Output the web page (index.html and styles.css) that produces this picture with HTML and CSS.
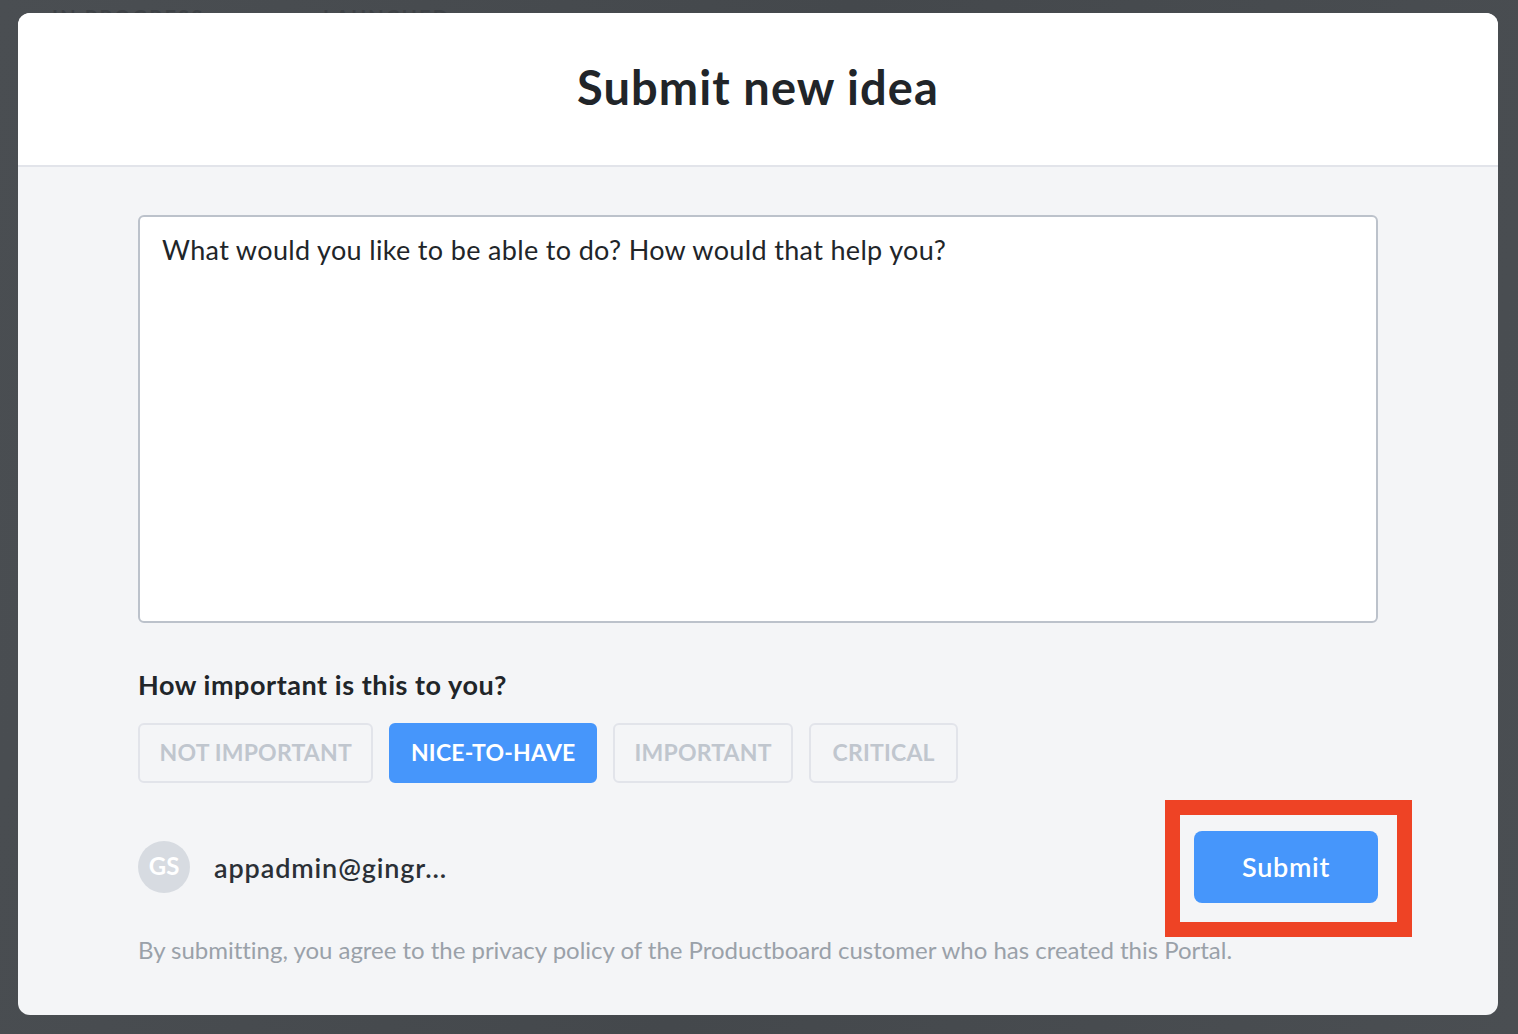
FILE: index.html
```html
<!DOCTYPE html>
<html lang="en">
<head>
<meta charset="utf-8">
<title>Submit new idea</title>
<link rel="stylesheet" href="styles.css">
</head>
<body>
<div class="backdrop">
  <div class="behind">
    <span class="behind-a">IN PROGRESS</span>
    <span class="behind-b">LAUNCHED</span>
  </div>
  <section class="modal">
    <header class="modal-head"><h1>Submit new idea</h1></header>
    <div class="modal-body">
      <div class="idea-box">What would you like to be able to do? How would that help you?</div>
      <h2>How important is this to you?</h2>
      <div class="choices">
        <button class="choice">NOT IMPORTANT</button>
        <button class="choice active">NICE-TO-HAVE</button>
        <button class="choice">IMPORTANT</button>
        <button class="choice critical">CRITICAL</button>
      </div>
      <div class="submit-row">
        <div class="avatar">GS</div>
        <div class="user">appadmin@gingr...</div>
        <button class="submit">Submit</button>
      </div>
      <p class="legal">By submitting, you agree to the privacy policy of the Productboard customer who has created this Portal.</p>
    </div>
    <div class="highlight"></div>
  </section>
</div>
</body>
</html>
```
FILE: styles.css
```css
* { box-sizing: border-box; }
html, body { margin: 0; height: 100%; }
body { font-family: "Lato", "Open Sans", sans-serif; color: #212529; background: #45494d; overflow: hidden; }
.backdrop { position: relative; height: 1034px; padding: 13px 20px 19px 18px; background: linear-gradient(100deg, #4a4e52 0%, #44484c 50%, #4a4e52 100%); }
.behind { position: absolute; top: 0; left: 52px; display: flex; font-size: 20px; font-weight: 700; letter-spacing: 2.2px; color: #3d4145; line-height: 1; padding-top: 7px; }
.behind-a { width: 271px; }
.modal { position: relative; height: 1002px; border-radius: 12px; overflow: hidden; background: #f4f5f7; display: flex; flex-direction: column; }
.modal-head { height: 154px; background: #fff; border-bottom: 2px solid #e2e4ea; display: flex; justify-content: center; align-items: center; padding-bottom: 5px; }
h1 { margin: 0; font-size: 47px; line-height: 56px; font-weight: 700; letter-spacing: 1.08px; color: #212529; }
.modal-body { padding: 48px 120px 0; flex: 1; }
.idea-box { height: 408px; background: #fff; border: 2px solid #bcc2cb; border-radius: 6px; padding: 18px 22px; font-size: 27px; line-height: 30px; letter-spacing: .34px; color: #212529; }
h2 { margin: 45px 0 0; font-size: 27px; line-height: 33px; font-weight: 700; letter-spacing: .55px; color: #212529; }
.choices { display: flex; gap: 16px; margin-top: 22px; }
.choice { height: 60px; padding: 0 19.5px 2px; border: 2px solid #e2e4ea; border-radius: 6px; background: transparent; font-family: inherit; font-size: 23px; font-weight: 700; letter-spacing: .2px; color: #c0c6ce; }
.choice.active { background: #4696fb; border-color: #4696fb; color: #fff; }
.critical { min-width: 149px; }
.submit-row { display: flex; align-items: center; margin-top: 48px; height: 72px; }
.avatar { width: 52px; height: 52px; border-radius: 50%; background: #d7dbe1; color: #fff; font-size: 24px; font-weight: 700; display: flex; align-items: center; justify-content: center; flex: none; padding-bottom: 3px; }
.user { margin-left: 24px; font-size: 27px; font-weight: 600; letter-spacing: .88px; color: #2b3036; flex: 1; }
.submit { width: 184px; height: 72px; border: 0; border-radius: 8px; background: #4696fb; color: #fff; font-family: inherit; font-size: 27px; font-weight: 600; letter-spacing: .7px; padding-bottom: 2px; }
.legal { margin: 32px 0 0; font-size: 24px; line-height: 30px; letter-spacing: -.02px; color: #9aa1a9; }
.highlight { position: absolute; left: 1147px; top: 787px; width: 247px; height: 137px; border: 15px solid #ee4325; }
```
